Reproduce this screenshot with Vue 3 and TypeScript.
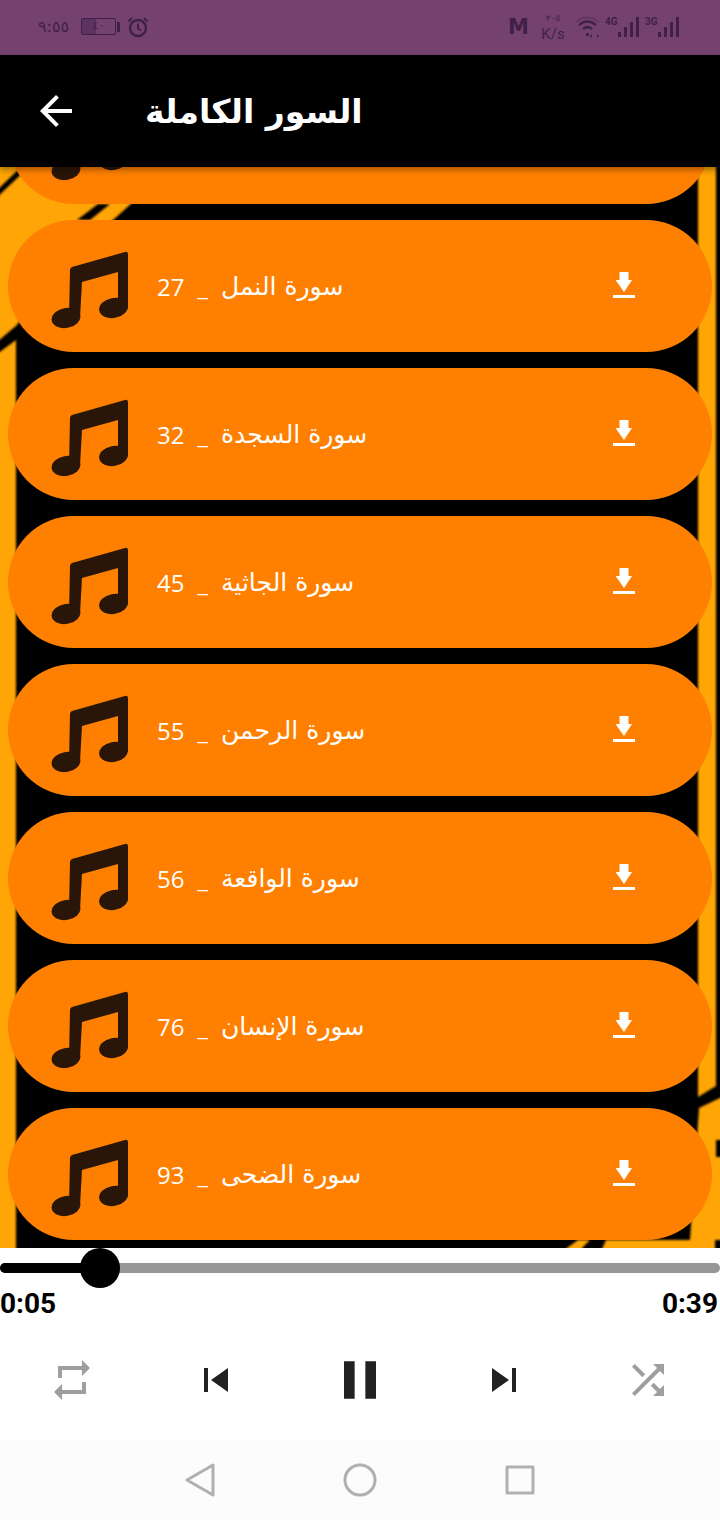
<script setup lang="ts">
// One row of the surah list
interface Surah {
  num: number;
  name: string;
}

const surahs: Surah[] = [
  { num: 27, name: 'سورة النمل' },
  { num: 32, name: 'سورة السجدة' },
  { num: 45, name: 'سورة الجاثية' },
  { num: 55, name: 'سورة الرحمن' },
  { num: 56, name: 'سورة الواقعة' },
  { num: 76, name: 'سورة الإنسان' },
  { num: 93, name: 'سورة الضحى' },
];

const progress = 100 / 720;
</script>

<template>
  <div class="screen">
    <div class="status">
      <div class="status-left">
        <span class="clock">٩:٥٥</span>
        <div class="battery">
          <div class="battery-body"><span class="battery-level"></span><span class="battery-text">٤٠</span></div>
          <span class="battery-cap"></span>
        </div>
        <svg class="alarm" width="22" height="22" viewBox="0 0 22 22" fill="none" stroke="#3f2148">
          <circle cx="11" cy="12" r="8" stroke-width="2.4" />
          <path d="M11 7.5V12.5L14 14.5" stroke-width="2" />
          <path d="M1.5 5.5L5 2M20.500 5.500L17 2" stroke-width="2" />
        </svg>
      </div>
      <div class="status-right">
        <span class="m-logo">M</span>
        <div class="speed"><span class="speed-num">٢٠٥</span><span class="speed-unit">K/s</span></div>
        <svg class="wifi" width="26" height="26" viewBox="0 0 26 26" fill="none" stroke="#3f2148">
          <path d="M1 8Q12 -1 24 8" stroke-width="1.500" opacity="0.45" />
          <path d="M4 11Q12 4 21 11" stroke-width="2.200" />
          <path d="M8 15Q12 11 17 15" stroke-width="2.200" />
          <path d="M11 19h3v3h-3zM17 20l-2 2 2 2zM22 20l2 2-2 2z" fill="#3f2148" stroke="none" />
        </svg>
        <div class="signal">
          <span class="net">4G</span>
          <svg width="22" height="22" viewBox="0 0 22 22" fill="#3f2148">
            <rect x="0" y="16" width="3" height="5" /><rect x="6" y="11" width="3" height="10" />
            <rect x="12" y="6" width="3" height="15" /><rect x="18" y="1" width="3" height="20" />
          </svg>
        </div>
        <div class="signal">
          <span class="net">3G</span>
          <svg width="22" height="22" viewBox="0 0 22 22" fill="#3f2148">
            <rect x="0" y="16" width="3" height="5" /><rect x="6" y="11" width="3" height="10" />
            <rect x="12" y="6" width="3" height="15" /><rect x="18" y="1" width="3" height="20" />
          </svg>
        </div>
      </div>
    </div>

    <header class="bar">
      <svg width="48" height="48" viewBox="0 0 24 24" fill="#fff">
        <path d="M20 11H7.830l5.590-5.590L12 4l-8 8 8 8 1.410-1.410L7.830 13H20v-2z" />
      </svg>
      <h1 class="title">السور الكاملة</h1>
    </header>

    <main class="content">
      <!-- blurry wallpaper behind the list, coordinates are the picture itself -->
      <svg class="wallpaper" width="740" height="1101" viewBox="-10 -10 740 1101" fill="#ffa505">
        <path d="M-10 -10H172V0L113 53L60 90L17 158L-10 181Z" />
        <path d="M-10 30L24 -3L32 -3L-10 37Z" fill="#000" />
        <path d="M77 53L98 37H110L90 53Z" fill="#000" />
        <path d="M-10 192L16 173V1091H-10Z" />
        <path d="M698 -10H716V919L698 930Z" />
        <path d="M699 941L730 926V1091H598L606 1073H690Z" />
        <path d="M567 1081L578 1073H590L582 1081V1091H560Z" />
        <path d="M716 973H730V990H716ZM715 1073H730V1091H715Z" fill="#000" />
      </svg>

      <div class="list">
        <!-- row scrolled away under the app bar, only its lower edge shows -->
        <div class="row">
          <svg class="note" width="80" height="80" viewBox="0 0 80 80" fill="#2a1608">
            <path d="M22 17L75 2Q78 1 78 5V58H68V22L32 32L30 68H19L20 20Q20 18 22 17Z" />
            <ellipse cx="16" cy="68" rx="14.500" ry="10" transform="rotate(-10 16 68)" />
            <ellipse cx="63.500" cy="58" rx="14.500" ry="10" transform="rotate(-10 63.500 58)" />
          </svg>
        </div>
        <div v-for="s in surahs" :key="s.num" class="row">
          <svg class="note" width="80" height="80" viewBox="0 0 80 80" fill="#2a1608">
            <path d="M22 17L75 2Q78 1 78 5V58H68V22L32 32L30 68H19L20 20Q20 18 22 17Z" />
            <ellipse cx="16" cy="68" rx="14.500" ry="10" transform="rotate(-10 16 68)" />
            <ellipse cx="63.500" cy="58" rx="14.500" ry="10" transform="rotate(-10 63.500 58)" />
          </svg>
          <div class="label">
            <span class="num">{{ s.num }}</span>
            <span class="sep">_</span>
            <span class="name">{{ s.name }}</span>
          </div>
          <svg class="dl" width="36" height="36" viewBox="0 0 36 36" fill="#fff">
            <path d="M13.500 4H22.500V12H26L18 24L9.500 12H13.500ZM7 27H29V30H7Z" />
          </svg>
        </div>
      </div>
    </main>

    <section class="player">
      <div class="slider">
        <div class="track"></div>
        <div class="played" :style="{ width: progress * 100 + '%' }"></div>
        <div class="thumb" :style="{ left: progress * 100 + '%' }"></div>
      </div>
      <div class="times">
        <span>0:05</span>
        <span>0:39</span>
      </div>
      <div class="controls">
        <svg width="48" height="48" viewBox="0 0 24 24" fill="#9e9e9e">
          <path d="M7 7h10v3l4-4-4-4v3H5v6h2V7zm10 10H7v-3l-4 4 4 4v-3h12v-6h-2v4z" />
        </svg>
        <svg width="48" height="48" viewBox="0 0 24 24" fill="#212121">
          <path d="M6 6h2v12H6zm3.500 6l8.500 6V6z" />
        </svg>
        <svg width="64" height="64" viewBox="0 0 24 24" fill="#212121">
          <path d="M6 19h4V5H6v14zm8-14v14h4V5h-4z" />
        </svg>
        <svg width="48" height="48" viewBox="0 0 24 24" fill="#212121">
          <path d="M6 18l8.500-6L6 6v12zM16 6v12h2V6h-2z" />
        </svg>
        <svg width="48" height="48" viewBox="0 0 24 24" fill="#9e9e9e">
          <path d="M10.590 9.170L5.410 4 4 5.410l5.170 5.170 1.420-1.410zM14.500 4l2.040 2.040L4 18.590 5.410 20 17.960 7.460 20 9.500V4h-5.500zm.33 9.410l-1.410 1.410 3.130 3.130L14.500 20H20v-5.500l-2.040 2.040-3.130-3.130z" />
        </svg>
      </div>
    </section>

    <nav class="nav">
      <svg width="48" height="48" viewBox="0 0 48 48" fill="none" stroke="#b0b0b0" stroke-width="3" stroke-linejoin="round">
        <path d="M11 24L37 9V39Z" />
      </svg>
      <svg width="48" height="48" viewBox="0 0 48 48" fill="none" stroke="#b0b0b0" stroke-width="3">
        <circle cx="24" cy="24" r="15" />
      </svg>
      <svg width="48" height="48" viewBox="0 0 48 48" fill="none" stroke="#b0b0b0" stroke-width="3" stroke-linejoin="round">
        <rect x="11" y="11" width="26" height="26" />
      </svg>
    </nav>
  </div>
</template>

<style scoped>
.screen {
  width: 720px;
  height: 1520px;
  display: flex;
  flex-direction: column;
  overflow: hidden;
  font-family: "DejaVu Sans", sans-serif;
  background: #fff;
}

/* status bar */
.status {
  height: 55px;
  flex: none;
  background: #75416f;
  display: flex;
  justify-content: space-between;
  align-items: center;
  padding: 0 40px 2px 38px;
  box-sizing: border-box;
  color: #3f2148;
}
.status-left,
.status-right {
  display: flex;
  align-items: center;
}
.status-left {
  gap: 10px;
}
.clock {
  font-size: 16px;
  width: 33px;
}
.battery {
  display: flex;
  align-items: center;
  gap: 1px;
}
.battery-body {
  position: relative;
  width: 35px;
  height: 17px;
  border: 1.500px solid #3f2148;
  border-radius: 2px;
  box-sizing: border-box;
  text-align: center;
  font-size: 11px;
  line-height: 14px;
}
.battery-level {
  position: absolute;
  left: 0;
  top: 0;
  bottom: 0;
  width: 14px;
  background: #5c3360;
}
.battery-text {
  position: relative;
}
.battery-cap {
  width: 3px;
  height: 10px;
  background: #3f2148;
}
.alarm {
  margin-left: -3px;
}
.m-logo {
  font-size: 21px;
  font-weight: 700;
  line-height: 22px;
  width: 24px;
}
.speed {
  display: flex;
  flex-direction: column;
  align-items: center;
  width: 24px;
  margin-left: 9px;
}
.speed-num {
  font-size: 9px;
  line-height: 14px;
}
.speed-unit {
  font-family: "Roboto", sans-serif;
  font-size: 15px;
  line-height: 18px;
}
.wifi {
  margin-left: 10px;
}
.signal {
  display: flex;
  align-items: flex-start;
  margin-left: 4px;
}
.signal + .signal {
  margin-left: 5px;
}
.net {
  font-family: "Roboto", sans-serif;
  font-size: 10px;
  font-weight: 700;
  line-height: 12px;
  width: 13px;
}

/* app bar */
.bar {
  height: 112px;
  flex: none;
  background: #000;
  display: flex;
  align-items: center;
  padding-left: 32px;
  box-sizing: border-box;
  position: relative;
  z-index: 2;
  box-shadow: 0 3px 6px rgba(0, 0, 0, 0.35);
}
.title {
  margin: 0 0 0 65px;
  color: #fff;
  font-size: 33px;
  font-weight: 700;
}

/* list */
.content {
  flex: 1;
  min-height: 0;
  position: relative;
  overflow: hidden;
  background: #000;
}
.wallpaper {
  position: absolute;
  left: -10px;
  top: -10px;
  filter: blur(0.8px);
}
.list {
  position: relative;
  display: flex;
  flex-direction: column;
  gap: 16px;
  padding: 0 8px;
  margin-top: -95px;
}
.row {
  height: 132px;
  flex: none;
  display: flex;
  align-items: center;
  padding: 0 70px 0 42px;
  border-radius: 66px;
  background: #ff8000;
  color: #fff;
}
.note {
  margin-top: 8px;
}
.label {
  display: flex;
  align-items: center;
  gap: 13px;
  margin-left: 27px;
  padding-top: 2px;
  font-size: 25px;
  line-height: 34px;
}
.num,
.sep {
  font-family: "Open Sans", sans-serif;
  font-size: 24px;
  font-weight: 400;
}
.dl {
  margin-left: auto;
}

/* player */
.player {
  height: 192px;
  flex: none;
  background: #fff;
}
.slider {
  position: relative;
  height: 40px;
}
.track,
.played {
  position: absolute;
  left: 0;
  top: 15px;
  height: 10px;
  border-radius: 5px;
}
.track {
  width: 100%;
  background: #969696;
}
.played {
  background: #000;
}
.thumb {
  position: absolute;
  top: 0;
  width: 40px;
  height: 40px;
  margin-left: -20px;
  border-radius: 50%;
  background: #000;
}
.times {
  display: flex;
  justify-content: space-between;
  padding: 0 2px 0 0;
  font-family: "Roboto", sans-serif;
  font-size: 28px;
  font-weight: 700;
  line-height: 32px;
  color: #000;
}
.controls {
  display: grid;
  grid-template-columns: repeat(5, 1fr);
  justify-items: center;
  align-items: center;
  height: 64px;
  margin-top: 28px;
}

/* system nav */
.nav {
  height: 80px;
  flex: none;
  background: #fcfcfc;
  display: flex;
  justify-content: center;
  align-items: center;
  gap: 112px;
}
</style>
